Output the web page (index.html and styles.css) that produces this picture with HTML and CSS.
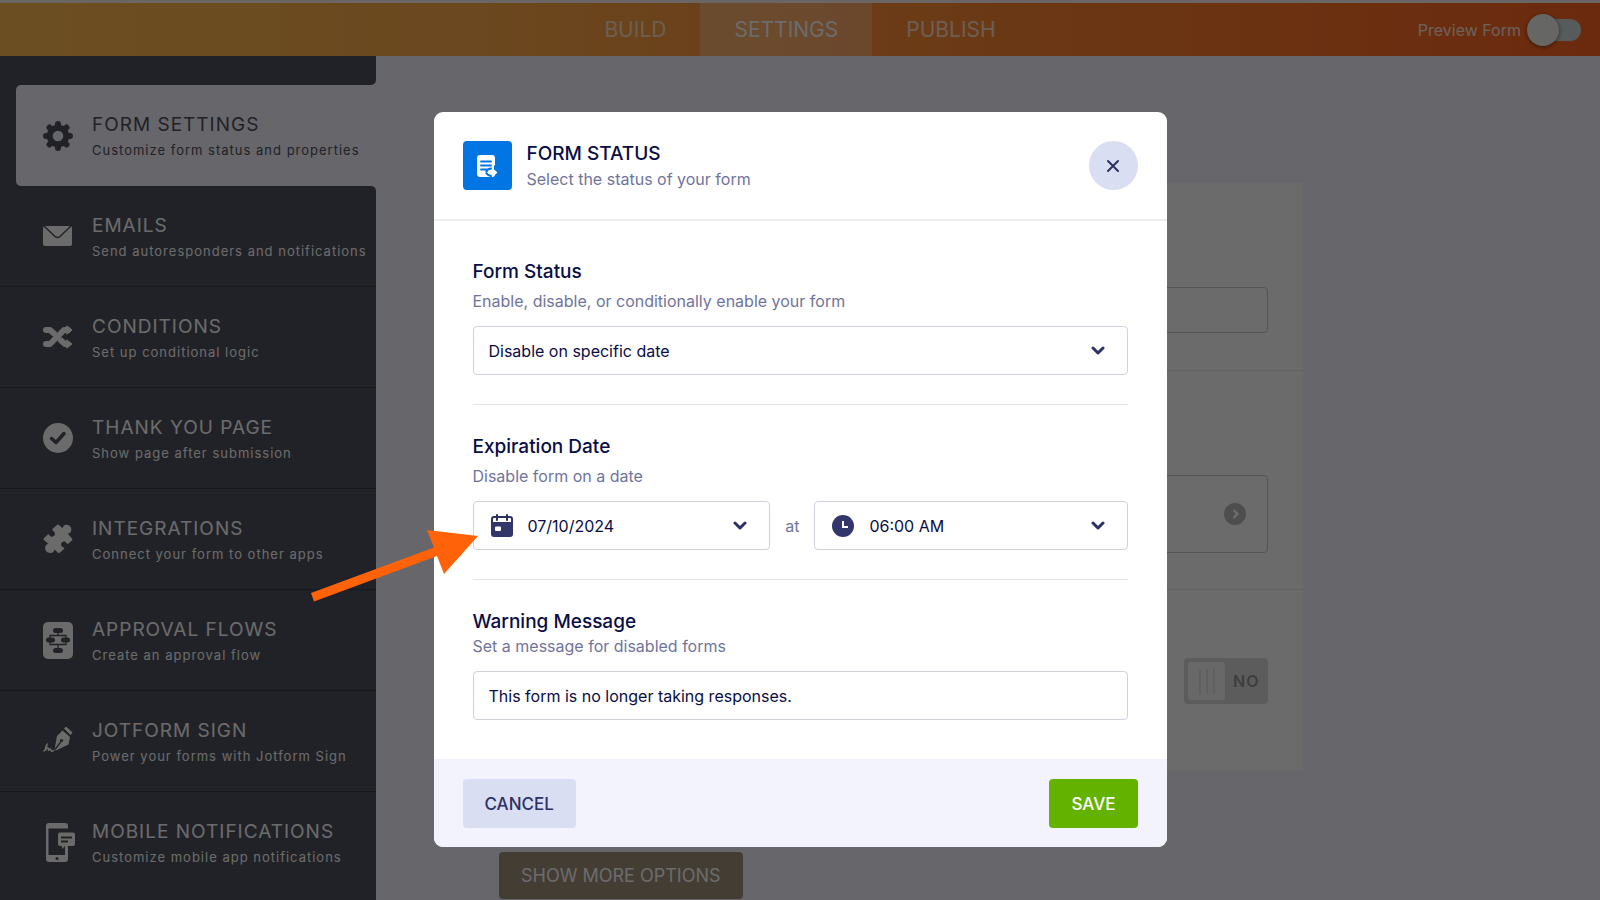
FILE: index.html
```html
<!DOCTYPE html>
<html lang="en">
<head>
  <meta charset="UTF-8">
  <meta name="viewport" content="width=device-width, initial-scale=1">
  <title>Form Settings</title>
  <link rel="stylesheet" href="styles.css">
</head>
<body>

  <header class="topbar">
    <nav class="tabs">
      <a href="#build">BUILD</a>
      <a href="#settings" class="active">SETTINGS</a>
      <a href="#publish">PUBLISH</a>
    </nav>
    <label class="preview">Preview Form <input type="checkbox" class="switch"></label>
  </header>

  <div class="layout">
    <aside class="sidebar">
      <div class="side-top"></div>
      <nav class="side-nav">
        <a href="#form-settings" class="side-item active">
          <svg class="side-icon" width="30" height="30" viewBox="0 0 30 30" fill="none" stroke="currentColor">
            <circle cx="15" cy="15" r="8.3" stroke-width="6"/>
            <path d="M15 3v3M15 24v3M3 15h3M24 15h3M6.5 6.5l2 2M21.500 21.500l2 2M23.500 6.500l-2 2M8.500 21.500l-2 2" stroke-width="6" stroke-linecap="round"/>
          </svg>
          <span><b>FORM SETTINGS</b><small>Customize form status and properties</small></span>
        </a>
        <a href="#emails" class="side-item">
          <svg class="side-icon" width="30" height="30" viewBox="0 0 30 30">
            <rect x="0" y="5" width="29" height="20" rx="2" fill="currentColor"/>
            <path d="M1 5l11 10.500q2.500 2 5 0L28 5" fill="none" stroke="#4f515d" stroke-width="1.500"/>
          </svg>
          <span><b>EMAILS</b><small>Send autoresponders and notifications</small></span>
        </a>
        <a href="#conditions" class="side-item">
          <svg class="side-icon" width="30" height="30" viewBox="0 0 30 30" fill="none" stroke="currentColor" stroke-width="6" stroke-linecap="round" stroke-linejoin="round">
            <path d="M3 8h4l4 3.500M18 18.500L22 22h2"/>
            <path d="M3 22h4L21 8h4"/>
            <path d="M24 4l5 4-5 4zM24 18l5 4-5 4z" fill="currentColor" stroke-width="1"/>
          </svg>
          <span><b>CONDITIONS</b><small>Set up conditional logic</small></span>
        </a>
        <a href="#thank-you" class="side-item">
          <svg class="side-icon" width="30" height="30" viewBox="0 0 30 30">
            <circle cx="15" cy="15" r="15" fill="currentColor"/>
            <path d="M8.500 15.500l4.500 4 8-9" fill="none" stroke="#4f515d" stroke-width="3.500" stroke-linecap="round" stroke-linejoin="round"/>
          </svg>
          <span><b>THANK YOU PAGE</b><small>Show page after submission</small></span>
        </a>
        <a href="#integrations" class="side-item">
          <svg class="side-icon" width="30" height="30" viewBox="0 0 30 30" fill="currentColor">
            <path d="M10 4.500L14 1q1-.8 2 0l4 3.500q-.5-2.500 2-3.500c4-1 7.500 2.500 6 6.500-1 2.500-3.500 2-3.500 2l4.500 5q.8 1 0 2l-3.500 3c-1 .8-1.500.5-2-.5-1-2.500-5-2-5.500 1-.3 2 1.500 3 2.500 3.500s1 1 .5 1.500L17 28.500q-1 1-2 .3l-3.500-3.300c-.5 2-1.500 3.500-4 3.500-4 0-6.500-3.500-5-7 .8-2 3-2 3-2L1 16q-1-1 0-2l3.500-3.300c.8-.8 1.500-.5 2 .6 1 2.500 5 1.500 5.500-1 .3-2-1.500-3-2-3.500q-1.500-1.300 0-2.300z"/>
          </svg>
          <span><b>INTEGRATIONS</b><small>Connect your form to other apps</small></span>
        </a>
        <a href="#approval" class="side-item">
          <svg class="side-icon" width="30" height="37" viewBox="0 0 30 37">
            <rect width="30" height="37" rx="5" fill="currentColor"/>
            <g fill="#4f515d">
              <rect x="10" y="6" width="10" height="5" rx="2.500"/>
              <rect x="3" y="15.500" width="9" height="5" rx="2.500"/>
              <rect x="18" y="15.500" width="9" height="5" rx="2.500"/>
              <rect x="10" y="26" width="10" height="5" rx="2.500"/>
            </g>
            <path d="M15 10v4M7 16v-2.500h16V16M7 20v2.500h16V20M15 22.500V27" fill="none" stroke="#4f515d" stroke-width="1.300"/>
          </svg>
          <span><b>APPROVAL FLOWS</b><small>Create an approval flow</small></span>
        </a>
        <a href="#sign" class="side-item">
          <svg class="side-icon" width="30" height="30" viewBox="0 0 30 30">
            <path d="M21.500 2.500l1.500-1.500 6 5.500-1.500 2z" fill="currentColor" stroke="currentColor" stroke-linejoin="round"/>
            <path d="M19.500 4.500l7.500 6.500-1.500 7.500L13 24.500l-1.500-.5L14 10z" fill="currentColor"/>
            <path d="M12 23.500l6-8" stroke="#4f515d" stroke-width="1.300"/>
            <circle cx="18.500" cy="14.500" r="1.600" fill="#4f515d"/>
            <path d="M1 25q3-3 3-6.500Q2.500 20 2.500 24.500q1.500-3 2.500-2.500t.5 3q2-3.500 2.500-1t2.500.5" fill="none" stroke="currentColor" stroke-width="1.500" stroke-linecap="round"/>
          </svg>
          <span><b>JOTFORM SIGN</b><small>Power your forms with Jotform Sign</small></span>
        </a>
        <a href="#mobile" class="side-item">
          <svg class="side-icon" width="30" height="39" viewBox="0 0 30 39">
            <path d="M6 0h16q3 0 3 3v2.500H5.500V32H22v-9h3v13q0 3-3 3H6q-3 0-3-3V3q0-3 3-3z" fill="currentColor"/>
            <circle cx="14" cy="35.500" r="1.500" fill="#4f515d"/>
            <path d="M17 9.500h13q2 0 2 2V21q0 2-2 2h-8l-3 3v-3h-2q-2 0-2-2v-9.500q0-2 2-2z" fill="currentColor"/>
            <path d="M18 14.500h11M18 18.500h7" stroke="#4f515d" stroke-width="1.800"/>
          </svg>
          <span><b>MOBILE NOTIFICATIONS</b><small>Customize mobile app notifications</small></span>
        </a>
      </nav>
    </aside>

    <main class="content">
      <div class="card">
        <div class="card-row"><input type="text" class="card-input" aria-label="Title"></div>
        <div class="card-row second">
          <button class="card-button" aria-label="Form status">
            <svg width="22" height="22" viewBox="0 0 22 22">
              <circle cx="11" cy="11" r="11" fill="#b9b9bd"/>
              <path d="M9.500 7l4 4-4 4" fill="none" stroke="#fff" stroke-width="2.500"/>
            </svg>
          </button>
        </div>
        <div class="card-row third">
          <label class="yesno"><input type="checkbox"><i></i>NO</label>
        </div>
      </div>
      <button class="more">SHOW MORE OPTIONS</button>
    </main>
  </div>

  <div class="overlay">
    <form class="modal" role="dialog" aria-labelledby="modalTitle">
      <div class="modal-header">
        <div class="modal-icon">
          <svg width="22" height="24" viewBox="0 0 22 24">
            <rect x="1" y="1" width="18" height="22" rx="3" fill="#fff"/>
            <path d="M5 7.500h10M5 11.500h10M5 15.500h6" stroke="#0075e3" stroke-width="1.800" stroke-linecap="round"/>
            <path d="M19 11.500v5M10 18q2-4 6-3.500M10 18.500q2 3.500 6 3.500" stroke="#0075e3" stroke-width="2" fill="none"/>
            <path d="M12 18.500h5M16.500 15l4 3.500-4 3.500z" fill="#fff" stroke="#fff" stroke-width="1.500" stroke-linejoin="round"/>
          </svg>
        </div>
        <div class="modal-heading">
          <h1 id="modalTitle">FORM STATUS</h1>
          <p>Select the status of your form</p>
        </div>
        <button type="button" class="close" aria-label="Close">
          <svg width="14" height="14" viewBox="0 0 14 14"><path d="M2 2l10 10M12 2L2 12" stroke="#2c3063" stroke-width="2" stroke-linecap="round"/></svg>
        </button>
      </div>

      <div class="modal-body">
        <section class="group">
          <label class="group-title" for="status">Form Status</label>
          <p class="gap">Enable, disable, or conditionally enable your form</p>
          <div class="field">
            <select id="status"><option>Disable on specific date</option></select>
            <svg class="chevron" width="14" height="10" viewBox="0 0 14 10"><path d="M2 2l5 5 5-5"/></svg>
          </div>
        </section>

        <section class="group">
          <label class="group-title" for="date">Expiration Date</label>
          <p class="gap">Disable form on a date</p>
          <div class="date-row">
            <div class="field date">
              <svg class="field-icon" width="22" height="24" viewBox="0 0 22 24">
                <path d="M3 3h16q2 0 2 2v4H1V5q0-2 2-2z" fill="#fff" stroke="#2c3063" stroke-width="2"/>
                <path d="M0 8.500h22V20q0 3-3 3H3q-3 0-3-3z" fill="#32366b"/>
                <path d="M6 1v5M16 1v5" stroke="#2c3063" stroke-width="2" stroke-linecap="round"/>
                <rect x="4" y="12.500" width="6" height="4.500" rx="1" fill="#fff"/>
              </svg>
              <input type="text" id="date" value="07/10/2024">
              <svg class="chevron" width="14" height="10" viewBox="0 0 14 10"><path d="M2 2l5 5 5-5"/></svg>
            </div>
            <label class="at" for="time">at</label>
            <div class="field time">
              <svg class="field-icon" width="22" height="22" viewBox="0 0 22 22">
                <circle cx="11" cy="11" r="11" fill="#32366b"/>
                <path d="M11 6v6h5" fill="none" stroke="#fff" stroke-width="2"/>
              </svg>
              <select id="time"><option>06:00 AM</option></select>
              <svg class="chevron" width="14" height="10" viewBox="0 0 14 10"><path d="M2 2l5 5 5-5"/></svg>
            </div>
          </div>
        </section>

        <section class="group">
          <label class="group-title" for="warning">Warning Message</label>
          <p>Set a message for disabled forms</p>
          <div class="field"><input type="text" id="warning" value="This form is no longer taking responses."></div>
        </section>
      </div>

      <div class="modal-footer">
        <button type="button" class="btn cancel">CANCEL</button>
        <button type="button" class="btn save">SAVE</button>
      </div>

      <svg class="arrow" width="170" height="76" viewBox="0 0 170 76">
        <path d="M1 65l123-45.500L117 2l51 6-34 38-7-18L4 73.500z" fill="#ff6208"/>
      </svg>
    </form>
  </div>

</body>
</html>
```
FILE: styles.css
```css
* { box-sizing: border-box; }
body { margin: 0; height: 100vh; overflow: hidden; display: flex; flex-direction: column; font-family: Inter, "Liberation Sans", sans-serif; font-size: 16px; background: #f5f3ff; }
button, input, select { font: inherit; color: inherit; }
a { text-decoration: none; }
svg { display: block; }
h1, p { margin: 0; }

/* top bar */
.topbar { display: grid; grid-template-columns: 1fr auto 1fr; height: 56px; flex: none; border-top: 3px solid #fff2ee; background: linear-gradient(90deg, #ffbb51, #ffab4a 30%, #ff8632 63%, #ff6421); }
.tabs { grid-column: 2; display: flex; }
.tabs a { padding: 0 34px; font-size: 21px; line-height: 53px; color: #ffe3c8; }
.tabs a.active { background: rgba(255, 255, 255, .25); color: #fff; }
.preview { justify-self: end; display: flex; align-items: center; gap: 8px; padding-right: 19px; color: #ffe9dc; }
.switch { appearance: none; position: relative; width: 52px; height: 22px; margin: 0; border-radius: 12px; background: #d2d9d9; }
.switch::before { content: ""; position: absolute; left: -2px; top: -5px; width: 32px; height: 32px; border-radius: 50%; background: #f4f4f0; box-shadow: 0 1px 4px rgba(0, 0, 0, .5); }

/* sidebar */
.layout { flex: 1; display: flex; min-height: 0; }
.sidebar { display: flex; flex-direction: column; width: 376px; flex: none; }
.side-top { height: 29px; flex: none; background: #4f515d; border-radius: 0 0 5px 0; }
/* keeps the corners next to the active item open */
.side-nav { flex: 1; background: linear-gradient(#4f515d, #4f515d) 0 0 / calc(100% - 6px) 100% no-repeat, linear-gradient(#4f515d, #4f515d) 0 107px no-repeat; }
.side-item { display: flex; height: 101px; padding-left: 43px; border-bottom: 1px solid #3c3e48; background: #4f515d; color: #fff; }
.side-item:last-child { border-bottom: 0; }
.side-item.active { margin-left: 16px; padding-left: 27px; border: 0; border-radius: 5px 0 0 5px; background: #f5f3ff; color: #4f515d; }
.side-item.active + .side-item { border-top-right-radius: 5px; }
.side-icon { flex: none; align-self: center; overflow: visible; }
.side-item span { padding: 27px 0 0 19px; white-space: nowrap; }
.side-item b { display: block; font-size: 19px; font-weight: 400; line-height: 26px; letter-spacing: 1px; }
.side-item small { display: block; font-size: 13px; line-height: 24px; letter-spacing: 1px; }

/* page behind the dialog */
.content { flex: 1; padding: 127px 0 0 123px; }
.card { max-width: 804px; background: #fff; }
.card-row { height: 188px; padding: 104px 35px 0; border-bottom: 1px solid #eaeaea; }
.card-row.second { height: 219px; }
.card-row.third { height: 181px; padding-top: 68px; border: 0; display: flex; justify-content: flex-end; }
.card-input { display: block; width: 100%; height: 46px; border: 1px solid #c8c8c8; border-radius: 4px; background: #fff; }
.card-button { display: flex; align-items: center; justify-content: flex-end; width: 100%; height: 78px; padding: 0 21px; border: 1px solid #c8c8c8; border-radius: 4px; background: #fff; }
.yesno { display: flex; align-items: center; width: 84px; height: 46px; padding: 4px; gap: 8px; border-radius: 4px; background: #dcdcdc; color: #949494; font-weight: 600; letter-spacing: 1px; }
.yesno input { position: absolute; opacity: 0; }
.yesno i { width: 37px; height: 38px; border-radius: 3px; background: repeating-linear-gradient(90deg, #e4e4e4 0 2px, #f8f8f8 2px 7px) 11px 7px / 16px 25px no-repeat #f8f8f8; }
.more { display: block; height: 47px; margin-top: 81px; padding: 0 22px; border: 0; border-radius: 4px; background: #a1917d; color: #fff; font-size: 18px; }

/* dialog */
.overlay { position: fixed; inset: 0; display: flex; justify-content: center; align-items: flex-start; padding-top: 112px; background: rgba(0, 0, 0, .58); }
.modal { position: relative; width: 733px; max-width: 94%; border-radius: 9px; background: #fff; color: #0a0d45; }
.modal-header { display: flex; gap: 15px; padding: 29px 29px 28px; border-bottom: 2px solid #eeeef0; }
.modal-icon { display: flex; align-items: center; justify-content: center; width: 49px; height: 49px; border-radius: 4px; background: #0075e3; }
.modal-heading { flex: 1; }
.modal-heading h1 { font-size: 19px; font-weight: 500; line-height: 26px; }
.modal p { color: #70749c; line-height: 24px; }
.close { display: flex; align-items: center; justify-content: center; width: 49px; height: 49px; padding: 0; border: 0; border-radius: 50%; background: #dadef3; }
.modal-body { padding: 39px; }
.group + .group { margin-top: 29px; padding-top: 30px; border-top: 1px solid #e3e5ec; }
.group-title { display: block; font-size: 19px; font-weight: 500; line-height: 24px; }
.group p { margin-bottom: 13px; }
.group p.gap { margin-top: 5px; }
.field { display: flex; align-items: center; min-width: 0; height: 49px; padding: 0 15px; border: 1px solid #cdd1e0; border-radius: 4px; }
.field input, .field select { flex: 1; min-width: 0; height: 100%; margin: 0; padding: 0; border: 0; outline: 0; appearance: none; background: none; }
.field-icon { flex: none; margin: 0 15px 0 2px; }
.chevron { flex: none; margin-right: 7px; fill: none; stroke: #2c3063; stroke-width: 3; stroke-linecap: round; stroke-linejoin: round; }
.date-row { display: flex; align-items: center; }
.date { flex: 297; }
.time { flex: 314; }
.at { width: 44px; text-align: center; color: #70749c; }
.modal-footer { display: flex; justify-content: space-between; padding: 20px 29px 19px; border-radius: 0 0 9px 9px; background: #f3f3fe; }
.btn { height: 49px; padding: 0 22px; border: 0; border-radius: 4px; font-size: 17px; font-weight: 500; }
.cancel { background: #dadef3; color: #2c3063; }
.save { background: #64b200; color: #fff; }
.arrow { position: absolute; left: -124px; top: 416px; }
```
